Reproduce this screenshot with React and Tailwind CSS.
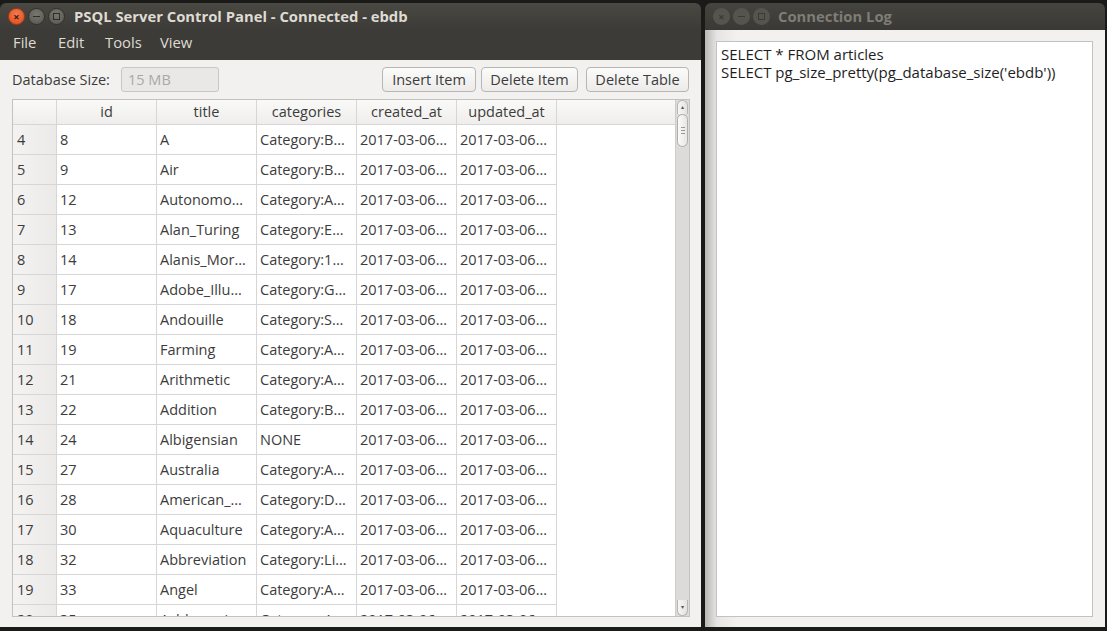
import React from "react";

const rows = [
  ["4", "8", "A", "Category:B…"],
  ["5", "9", "Air", "Category:B…"],
  ["6", "12", "Autonomo…", "Category:A…"],
  ["7", "13", "Alan_Turing", "Category:E…"],
  ["8", "14", "Alanis_Mor…", "Category:1…"],
  ["9", "17", "Adobe_Illu…", "Category:G…"],
  ["10", "18", "Andouille", "Category:S…"],
  ["11", "19", "Farming", "Category:A…"],
  ["12", "21", "Arithmetic", "Category:A…"],
  ["13", "22", "Addition", "Category:B…"],
  ["14", "24", "Albigensian", "NONE"],
  ["15", "27", "Australia", "Category:A…"],
  ["16", "28", "American_…", "Category:D…"],
  ["17", "30", "Aquaculture", "Category:A…"],
  ["18", "32", "Abbreviation", "Category:Li…"],
  ["19", "33", "Angel", "Category:A…"],
  ["20", "35", "Ashkenazi", "Category:A…"],
];

function WinButtons({ active }) {
  if (active) {
    return (
      <div className="flex items-center gap-[3px] pl-[8px]">
        <div className="w-[17px] h-[17px] rounded-full bg-[radial-gradient(circle_at_50%_35%,#f47a4f,#df4a16)] border border-[#a8391a] flex items-center justify-center text-[#3c1a10] text-[11px] leading-none font-bold">×</div>
        <div className="w-[17px] h-[17px] rounded-full bg-[radial-gradient(circle_at_50%_35%,#78776f,#56554f)] border border-[#33322e] flex items-center justify-center">
          <div className="w-[7px] h-[1.5px] bg-[#2e2d29]" />
        </div>
        <div className="w-[17px] h-[17px] rounded-full bg-[radial-gradient(circle_at_50%_35%,#78776f,#56554f)] border border-[#33322e] flex items-center justify-center">
          <div className="w-[7px] h-[7px] border border-[#2e2d29]" />
        </div>
      </div>
    );
  }
  return (
    <div className="flex items-center gap-[3px] pl-[8px]">
      <div className="w-[17px] h-[17px] rounded-full bg-[#55544e] flex items-center justify-center text-[#3b3a36] text-[11px] leading-none font-bold">×</div>
      <div className="w-[17px] h-[17px] rounded-full bg-[#55544e] flex items-center justify-center">
        <div className="w-[7px] h-[1.5px] bg-[#3b3a36]" />
      </div>
      <div className="w-[17px] h-[17px] rounded-full bg-[#55544e] flex items-center justify-center">
        <div className="w-[7px] h-[7px] border border-[#3b3a36]" />
      </div>
    </div>
  );
}

function Btn({ children, w }) {
  return (
    <div
      className={`${w} h-[25px] rounded-[4px] border border-[#b8b6b2] bg-[linear-gradient(#fbfbfa,#ecebe9)] flex items-center justify-center text-[#3c3c3c]`}
    >
      {children}
    </div>
  );
}

const cellCls =
  "border-r border-b border-[#d6d6d6] px-[3px] flex items-center whitespace-nowrap overflow-hidden";

export default function App() {
  return (
    <div
      className="w-[1107px] h-[631px] bg-[#1a1a18] flex pt-[3px] overflow-hidden text-[14.5px] text-[#3c3c3c]"
      style={{ fontFamily: '"Open Sans", "Noto Sans", sans-serif' }}
    >
      {/* Left window */}
      <div className="w-[701px] h-[624px] flex flex-col rounded-t-[6px] overflow-hidden">
        <div className="h-[27px] bg-[linear-gradient(#494843,#3c3b37)] flex items-center">
          <WinButtons active />
          <div className="ml-[9px] text-[#dfdbd2] font-bold text-[14.8px]">
            PSQL Server Control Panel - Connected - ebdb
          </div>
        </div>
        <div className="h-[30px] bg-[#3c3b37] flex items-center pl-[13px] pb-[5px] text-[#dfdbd2] text-[14.8px]">
          <span className="w-[45px]">File</span>
          <span className="w-[47px]">Edit</span>
          <span className="w-[55px]">Tools</span>
          <span>View</span>
        </div>
        <div className="flex-1 bg-[#f2f1f0] flex flex-col px-[12px] pt-[7px] pb-[10px]">
          <div className="h-[25px] flex items-center">
            <span className="w-[109px]">Database Size:</span>
            <div className="w-[98px] h-[25px] rounded-[3px] border border-[#c9c7c3] bg-[#e9e8e6] text-[#a9a8a5] flex items-center pl-[6px]">
              15 MB
            </div>
            <div className="flex-1" />
            <div className="flex">
              <Btn w="w-[94px]">Insert Item</Btn>
              <div className="w-[5px]" />
              <Btn w="w-[97px]">Delete Item</Btn>
              <div className="w-[8px]" />
              <Btn w="w-[103px]">Delete Table</Btn>
            </div>
          </div>
          <div className="mt-[7px] h-[518px] w-[678px] border border-[#c4c2be] bg-white flex overflow-hidden">
            <div className="flex-1 flex flex-col overflow-hidden">
              <div className="h-[25px] shrink-0 flex bg-[linear-gradient(#f9f9f8,#efeeec)] border-b border-[#d6d6d6]">
                <div className="w-[44px] border-r border-[#d6d6d6]" />
                {["id", "title", "categories", "created_at", "updated_at"].map((h) => (
                  <div key={h} className="w-[100px] border-r border-[#d6d6d6] flex items-center justify-center">
                    {h}
                  </div>
                ))}
              </div>
              {rows.map((r) => (
                <div key={r[0]} className="h-[30px] shrink-0 flex">
                  <div className={`${cellCls} w-[44px] bg-[linear-gradient(90deg,#f4f3f2,#eceae8)] pl-[4px]`}>{r[0]}</div>
                  <div className={`${cellCls} w-[100px]`}>{r[1]}</div>
                  <div className={`${cellCls} w-[100px]`}>{r[2]}</div>
                  <div className={`${cellCls} w-[100px]`}>{r[3]}</div>
                  <div className={`${cellCls} w-[100px]`}>2017-03-06…</div>
                  <div className={`${cellCls} w-[100px]`}>2017-03-06…</div>
                </div>
              ))}
            </div>
            {/* scrollbar */}
            <div className="w-[14px] shrink-0 bg-[#dcdbd9] border-l border-[#cfcdca] flex flex-col">
              <div className="h-[14px] mx-[1px] rounded-t-full bg-[linear-gradient(90deg,#f6f6f5,#e4e3e1)] border border-[#b9b7b3] border-b-0 flex items-center justify-center text-[6px] text-[#555]">▴</div>
              <div className="h-[33px] mx-[1px] rounded-full bg-[linear-gradient(90deg,#fafaf9,#e7e6e4)] border border-[#b0aeaa] flex flex-col items-center justify-center gap-[2px]">
                <div className="w-[4px] h-[1px] bg-[#9a9893]" />
                <div className="w-[4px] h-[1px] bg-[#9a9893]" />
                <div className="w-[4px] h-[1px] bg-[#9a9893]" />
              </div>
              <div className="flex-1" />
              <div className="h-[16px] mx-[1px] rounded-b-full bg-[linear-gradient(90deg,#f6f6f5,#e4e3e1)] border border-[#b9b7b3] border-t-0 flex items-center justify-center text-[6px] text-[#555]">▾</div>
            </div>
          </div>
        </div>
      </div>
      <div className="w-[4px]" />
      {/* Right window */}
      <div className="w-[400px] h-[624px] flex flex-col rounded-t-[6px] overflow-hidden">
        <div className="h-[27px] bg-[linear-gradient(#45443f,#3a3935)] flex items-center">
          <WinButtons />
          <div className="ml-[8px] text-[#7e7d77] font-bold text-[14.8px]">Connection Log</div>
        </div>
        <div className="flex-1 bg-[linear-gradient(90deg,#b9b8b5,#e6e5e3_3%,#f2f1f0_8%)] pl-[11px] pr-[12px] pt-[11px] pb-[10px] flex">
          <div className="flex-1 bg-white border border-[#c4c2be] px-[4px] pt-[3px] leading-[18px] text-[15px] text-[#1e1e1e]">
            <div>SELECT * FROM articles</div>
            <div>SELECT pg_size_pretty(pg_database_size('ebdb'))</div>
          </div>
        </div>
      </div>
    </div>
  );
}
